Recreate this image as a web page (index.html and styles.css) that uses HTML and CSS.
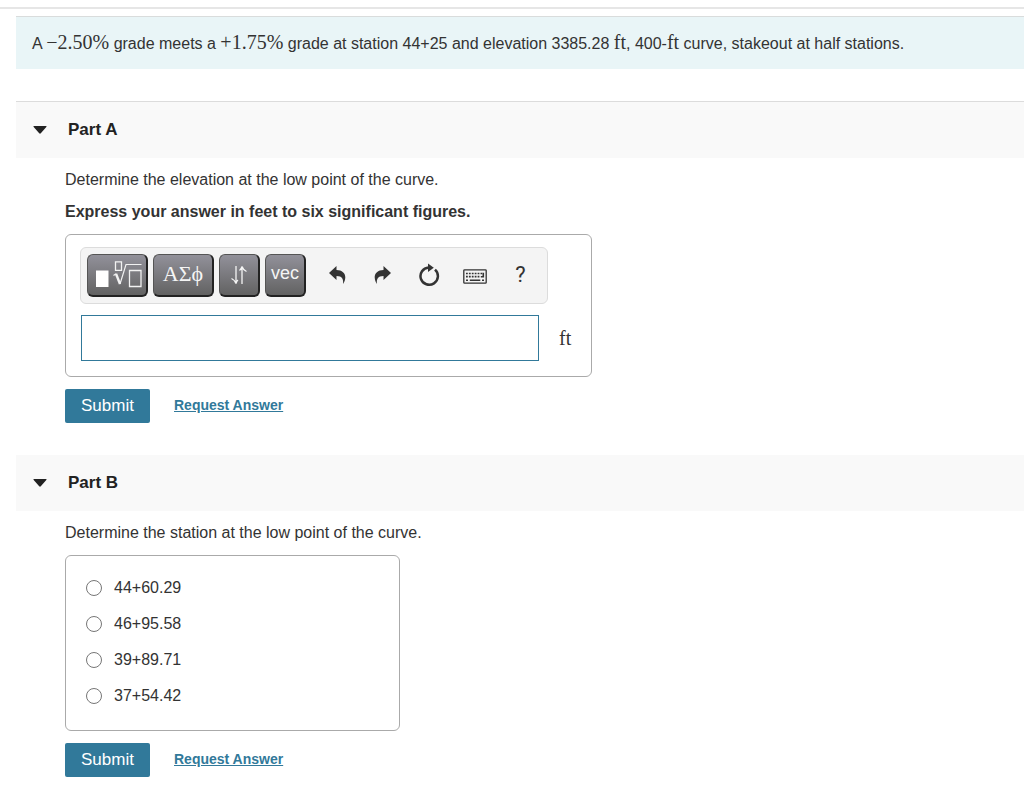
FILE: index.html
```html
<!DOCTYPE html>
<html lang="en">
<head>
<meta charset="utf-8">
<meta name="viewport" content="width=device-width, initial-scale=1">
<title>Vertical curve</title>
<link rel="stylesheet" href="styles.css">
</head>
<body>
<header class="top-rule"></header>
<main class="page">
  <p class="problem">A <span class="math">−2.50%</span> grade meets a <span class="math">+1.75%</span> grade at station 44+25 and elevation 3385.28 <span class="math">ft</span>, 400-<span class="math">ft</span> curve, stakeout at half stations.</p>

  <section class="part">
    <h2 class="part-header ruled">
      <button type="button" class="part-toggle" aria-expanded="true">
        <svg class="caret" viewBox="0 0 14 8" aria-hidden="true"><path d="M0.5 0h13q.2.6-.4 1.2L7.8 7.3q-.8.7-1.6 0L.9 1.2Q.3.6.5 0z"/></svg>
        <span>Part A</span>
      </button>
    </h2>
    <form class="part-body">
      <p class="text" id="ask-a">Determine the elevation at the low point of the curve.</p>
      <p class="text strong">Express your answer in feet to six significant figures.</p>
      <div class="answer-box editor">
        <div class="toolbar" role="toolbar" aria-label="Equation tools">
          <button type="button" class="key wide templates" aria-label="Templates">
            <svg width="48" height="28" viewBox="0 0 48 28" aria-hidden="true">
              <path fill="#fff" d="M1 9.500h12.500v16.500H1z"/>
              <g fill="none" stroke="#f2f2f2">
                <path stroke-width="1.300" d="M20.500.8h6v8.500h-6zM34.500 9.500h11.500v16h-11.500z"/>
                <path stroke-width="1.200" d="M18.500 14.500l2.500-1.700M25 23L31 3.500h15.500"/>
                <path stroke-width="2.400" d="M21 12.800L25 23"/>
              </g>
            </svg>
          </button>
          <button type="button" class="key wide greek">ΑΣϕ</button>
          <button type="button" class="key" aria-label="Arrows">
            <svg width="18" height="20" viewBox="0 0 18 20" aria-hidden="true" fill="none" stroke="#f5f5f5" stroke-width="1.300"><path d="M6 1v17M1.500 13.500Q4.800 15 6 18.500V15M6 18.500Q6.600 16 8 15M12 19V2M16.500 6.500Q13.200 5 12 1.500V5M12 1.500Q11.400 4 9.500 5.500"/></svg>
          </button>
          <button type="button" class="key vec">vec</button>
          <div class="tools">
            <button type="button" class="tool" aria-label="Undo">
              <svg width="18" height="20" viewBox="0 0 18 20" aria-hidden="true"><path d="M1 8L8.500 1v4C14 5.200 17.500 8 17.300 12.500c-.1 2.500-.9 4.500-2.300 6.500.7-4.700-.7-8-6.500-8v4z"/></svg>
            </button>
            <button type="button" class="tool" aria-label="Redo">
              <svg width="18" height="20" viewBox="0 0 18 20" aria-hidden="true"><path d="M17 8L9.500 1v4C4 5.200.5 8 .7 12.500c.1 2.500.9 4.500 2.300 6.500-.7-4.700.7-8 6.500-8v4z"/></svg>
            </button>
            <button type="button" class="tool" aria-label="Reset">
              <svg width="22" height="24" viewBox="0 0 22 24" aria-hidden="true"><path d="M17 6.600a8.700 8.700 0 1 1-6.300-2.200" fill="none" stroke="#333" stroke-width="2.500"/><path d="M10 .5l5.800 4.200L10 9z"/></svg>
            </button>
            <button type="button" class="tool" aria-label="Keyboard shortcuts">
              <svg class="keyboard" width="24" height="15" viewBox="0 0 24 15" aria-hidden="true" fill="none" stroke="#333"><rect x=".8" y=".8" width="22.400" height="13.400" rx=".8" stroke-width="1.300"/><path stroke-width="1.600" stroke-dasharray="1.800 1.100" d="M3 4.500h16.800M3 7.600h14.500"/><path stroke-width="1.600" d="M20.300 3.700v4h-2.500M3 11.200h2M6.800 11.200h10.500M19 11.200h2"/></svg>
            </button>
            <button type="button" class="tool help" aria-label="Help">?</button>
          </div>
        </div>
        <div class="entry">
          <input class="answer" type="text" id="answer-a" aria-labelledby="ask-a">
          <label class="math unit" for="answer-a">ft</label>
        </div>
      </div>
      <div class="actions">
        <button type="submit" class="submit">Submit</button>
        <a class="request" href="#">Request Answer</a>
      </div>
    </form>
  </section>

  <section class="part">
    <h2 class="part-header">
      <button type="button" class="part-toggle" aria-expanded="true">
        <svg class="caret" viewBox="0 0 14 8" aria-hidden="true"><path d="M0.5 0h13q.2.6-.4 1.2L7.8 7.3q-.8.7-1.6 0L.9 1.2Q.3.6.5 0z"/></svg>
        <span>Part B</span>
      </button>
    </h2>
    <form class="part-body">
      <p class="text" id="ask-b">Determine the station at the low point of the curve.</p>
      <div class="answer-box choices" role="radiogroup" aria-labelledby="ask-b">
        <label class="choice"><input type="radio" name="station" class="radio">44+60.29</label>
        <label class="choice"><input type="radio" name="station" class="radio">46+95.58</label>
        <label class="choice"><input type="radio" name="station" class="radio">39+89.71</label>
        <label class="choice"><input type="radio" name="station" class="radio">37+54.42</label>
      </div>
      <div class="actions">
        <button type="submit" class="submit">Submit</button>
        <a class="request" href="#">Request Answer</a>
      </div>
    </form>
  </section>
</main>
</body>
</html>
```
FILE: styles.css
```css
* {
  box-sizing: border-box;
}

body {
  margin: 0;
  background: #fff;
  color: #333;
  font: 16px/20px "Liberation Sans", Arial, sans-serif;
}

h2,
p {
  margin: 0;
}

button,
input {
  font: inherit;
}

.top-rule {
  height: 9px;
  border-bottom: 2px solid #e6e6e6;
}

.page {
  padding: 7px 0 12px 16px;
}

.problem {
  margin-bottom: 32px;
  padding: 15px 16px;
  border-top: 1px solid #d9dcdc;
  background: #e9f5f7;
}

.math {
  font-family: "Liberation Serif", "Times New Roman", serif;
  font-size: 20px;
  line-height: 20px;
}

.part {
  margin-bottom: 32px;
}

.part-header {
  background: #f9f9f9;
  font-size: 17px;
}

.ruled {
  border-top: 1px solid #dcdcdc;
}

.part-toggle {
  display: flex;
  align-items: center;
  gap: 21px;
  width: 100%;
  height: 56px;
  padding: 0 17px;
  border: 0;
  background: none;
  color: #222;
  font-weight: bold;
}

.caret {
  width: 14px;
  height: 8px;
  fill: #222;
}

.part-body {
  display: flex;
  flex-direction: column;
  align-items: flex-start;
  gap: 12px;
  padding: 12px 16px 0 49px;
}

.strong {
  font-weight: bold;
}

.answer-box {
  border: 1px solid #aaa;
  border-radius: 6px;
}

.editor {
  display: flex;
  flex-direction: column;
  gap: 11px;
  padding: 12px 20px 15px 14px;
}

.toolbar {
  display: flex;
  align-items: center;
  align-self: flex-start;
  gap: 5px;
  padding: 6px;
  border: 1px solid #dcdcdc;
  border-radius: 6px;
  background: #f4f4f4;
}

.key {
  display: flex;
  align-items: center;
  justify-content: center;
  width: 41px;
  height: 43px;
  padding: 0;
  border: 1px solid #555;
  border-right: 2px solid #222;
  border-bottom: 2px solid #222;
  border-radius: 6px;
  background: linear-gradient(#92919a, #626262);
  color: #f5f5f5;
}

.wide {
  width: 61px;
}

.templates {
  padding-left: 4px;
}

.greek {
  padding-bottom: 2px;
  font-family: "Liberation Serif", "Times New Roman", serif;
  font-size: 22px;
}

.vec {
  padding-bottom: 4px;
  font-size: 18px;
}

.tools {
  display: flex;
  gap: 5px;
  padding-left: 5px;
}

.tool {
  display: flex;
  align-items: center;
  justify-content: center;
  width: 42px;
  height: 42px;
  padding: 0 0 2px;
  border: 0;
  background: none;
  color: #333;
  fill: #333;
}

.tools .tool {
  width: 41px;
}

.keyboard {
  margin-top: 4px;
}

.help {
  font: 22px/24px Roboto, sans-serif;
}

.entry {
  display: flex;
  align-items: center;
  gap: 20px;
  padding-left: 1px;
}

.answer {
  width: 458px;
  height: 46px;
  padding: 0 8px;
  border: 1px solid #31799a;
  background: #fff;
}

.actions {
  display: flex;
  align-items: center;
  gap: 24px;
}

.submit {
  width: 85px;
  height: 34px;
  padding: 0;
  border: 0;
  border-radius: 2px;
  background: #31799a;
  color: #fff;
  font-size: 17px;
}

.request {
  padding-bottom: 2px;
  color: #31799a;
  font-size: 14px;
  font-weight: bold;
}

.choices {
  display: flex;
  flex-direction: column;
  gap: 16px;
  width: 335px;
  padding: 22px 20px 24px;
}

.choice {
  display: flex;
  align-items: center;
  gap: 12px;
}

.radio {
  appearance: none;
  width: 16px;
  height: 16px;
  margin: 0;
  border: 1px solid #767676;
  border-radius: 50%;
  background: #fff;
}

.radio:checked {
  border: 5px solid #31799a;
}
```
